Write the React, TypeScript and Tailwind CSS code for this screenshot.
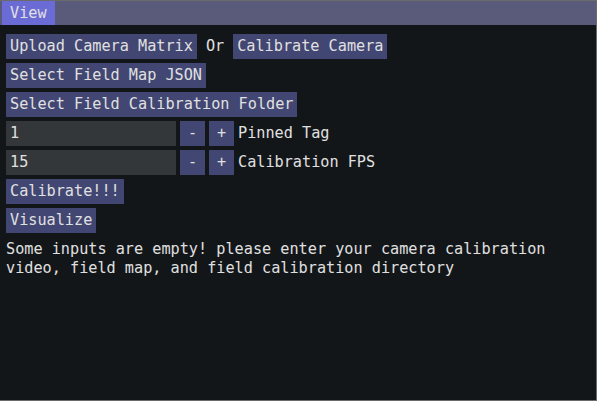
import type { ReactNode } from "react";

function Btn({ children }: { children: ReactNode }) {
  return (
    <div className="h-[25px] px-[4px] bg-[#414672] flex items-center whitespace-pre">
      {children}
    </div>
  );
}

function StepInput({ value, label }: { value: string; label: string }) {
  return (
    <div className="flex items-center">
      <div className="w-[170px] h-[25px] px-[4px] bg-[#343739] flex items-center">{value}</div>
      <div className="ml-[4px] w-[25px] h-[25px] bg-[#414672] flex items-center justify-center">-</div>
      <div className="ml-[4px] w-[25px] h-[25px] bg-[#414672] flex items-center justify-center">+</div>
      <span className="ml-[4px] whitespace-pre">{label}</span>
    </div>
  );
}

export default function App() {
  return (
    <div className="w-[597px] h-[401px] bg-[#131619] border-t border-r border-b border-[#6b6b6b] flex flex-col font-['DejaVu_Sans_Mono',monospace] text-[15.2px] leading-[19px] text-[#e0e0e0]">
      <div className="h-[24px] bg-[#5a5a7a] flex items-stretch pl-[2px]">
        <div className="px-[8px] bg-[#6b6bd6] flex items-center">View</div>
      </div>

      <div className="px-[6px] pt-[9px] flex flex-col items-start gap-[4px]">
        <div className="flex items-center">
          <Btn>Upload Camera Matrix</Btn>
          <span className="ml-[9px] mr-[9px]">Or</span>
          <Btn>Calibrate Camera</Btn>
        </div>
        <Btn>Select Field Map JSON</Btn>
        <Btn>Select Field Calibration Folder</Btn>
        <StepInput value="1" label="Pinned Tag" />
        <StepInput value="15" label="Calibration FPS" />
        <Btn>Calibrate!!!</Btn>
        <Btn>Visualize</Btn>
        <p className="mt-[3px]">
          Some inputs are empty! please enter your camera calibration video, field map, and field calibration directory
        </p>
      </div>
    </div>
  );
}
